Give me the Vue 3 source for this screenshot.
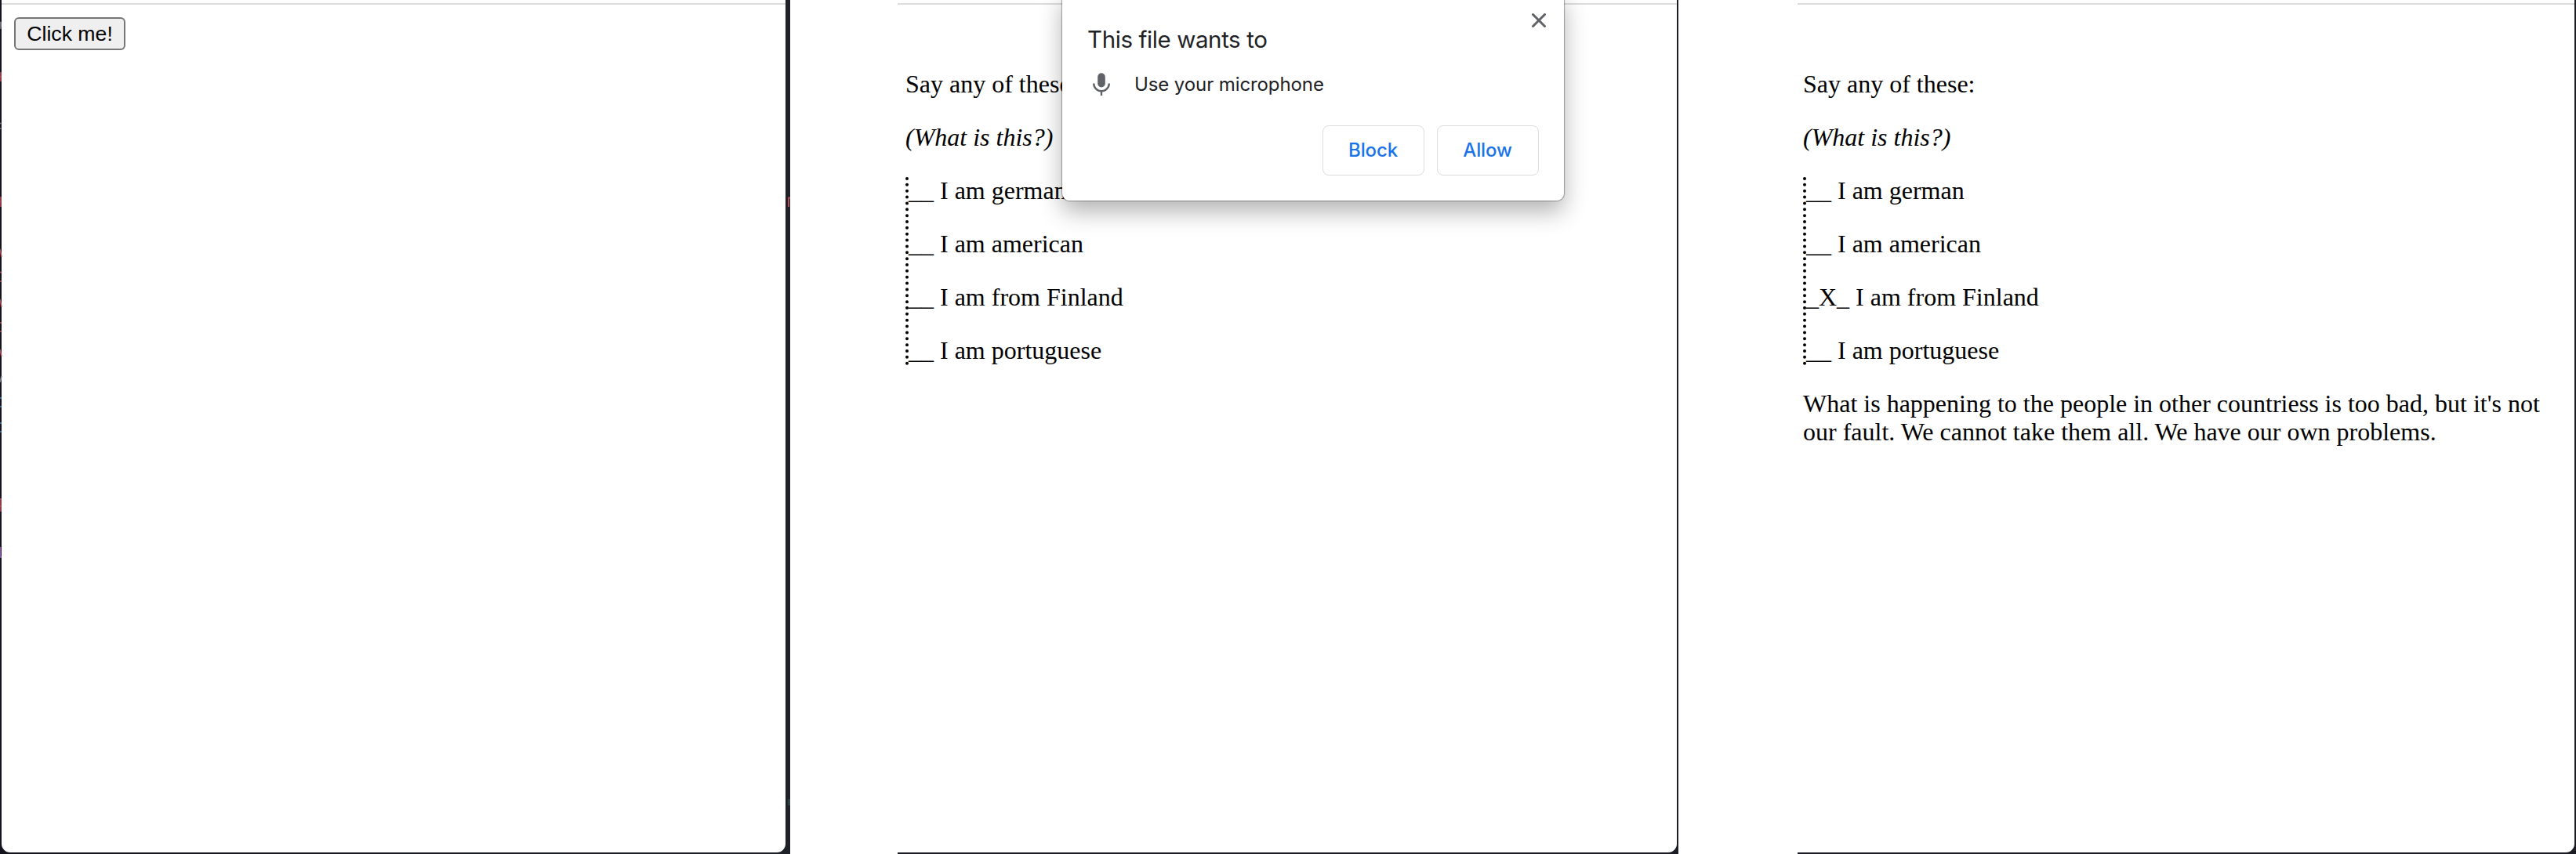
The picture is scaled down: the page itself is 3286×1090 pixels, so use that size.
<script setup>
const leftOptions = ['__ I am german', '__ I am american', '__ I am from Finland', '__ I am portuguese']
const rightOptions = ['__ I am german', '__ I am american', '_X_ I am from Finland', '__ I am portuguese']

const grey = '#7c818c'
const red = '#b04a55'
const blue = '#3f7fb5'
// Slivers of the editor window that show behind the browser's left edge
const slivers = [
  { d: 'M0 28.5H1.5M1 29V35M0 36H1.5', c: grey },
  { d: 'M1 92V104M0 98H2', c: red },
  { d: 'M0 157.5H1.5M0 164H1.5', c: grey },
  { d: 'M0 252H1V264M0 257H1.5', c: red },
  { d: 'M0 318L2 328', c: red },
  { d: 'M0 347.5H2M0 359H2', c: red },
  { d: 'M0 382L2 392', c: red },
  { d: 'M0 412H2M0 423H2', c: red },
  { d: 'M0 446L2 455', c: red },
  { d: 'M0 488L2 480', c: grey },
  { d: 'M0 508H2M0 519H2', c: blue },
  { d: 'M0 540H2M0 551H2', c: blue },
  { d: 'M1 636V653M0 637H2M0 646H2', c: red },
  { d: 'M0.5 698V711H2', c: '#9455ad' }
]
</script>

<template>
  <main class="board">
    <section class="frame first">
      <div class="page">
        <button class="click">Click me!</button>
      </div>
      <svg class="edge" viewBox="0 0 1008 1090">
        <path v-for="s in slivers" :key="s.d" :d="s.d" :stroke="s.c" />
        <path d="M1006 264V252.500H1008" stroke="#b04a55" stroke-width="2" />
        <path d="M1006.500 1020V1028" stroke="#3f5f63" />
      </svg>
    </section>

    <section class="frame second">
      <div class="page">
        <div class="doc">
          <p>Say any of these:</p>
          <p><em>(What is this?)</em></p>
          <div class="options">
            <p v-for="o in leftOptions" :key="o"><span>{{ o }}</span></p>
          </div>
        </div>
      </div>
      <div class="prompt">
        <svg class="close" viewBox="0 0 18 18"><path d="M1.5 1.5 16.5 16.5M16.5 1.5 1.5 16.5" /></svg>
        <h1>This file wants to</h1>
        <div class="permission">
          <svg class="mic" viewBox="0 0 22 29">
            <rect x="6.2" y="0.3" width="9.6" height="18.2" rx="4.8" fill="#5f6368" />
            <path d="M1.2 13.5a9.8 9.8 0 0 0 19.6 0M11 23.3V29" fill="none" stroke="#5f6368" stroke-width="2.4" />
          </svg>
          <span>Use your microphone</span>
        </div>
        <div class="actions">
          <button>Block</button>
          <button>Allow</button>
        </div>
      </div>
    </section>

    <section class="frame third">
      <div class="page">
        <div class="doc">
          <p>Say any of these:</p>
          <p><em>(What is this?)</em></p>
          <div class="options">
            <p v-for="o in rightOptions" :key="o"><span>{{ o }}</span></p>
          </div>
          <p>What is happening to the people in other countriess is too bad, but it's not our fault. We cannot take them all. We have our own problems.</p>
        </div>
      </div>
    </section>
  </main>
</template>

<style>
body { margin: 0; background: #fff; }
</style>

<style scoped>
.board { display: flex; width: 3286px; height: 1090px; overflow: hidden; background: #fff; }
.frame { position: relative; box-sizing: border-box; height: 1090px; background: #1c1d24; padding-bottom: 2px; }
.first { width: 1008px; padding-left: 2px; padding-right: 6px; background: linear-gradient(90deg, #14141c 2px, #1e2127 996px); margin-right: 137px; }
.second { width: 996px; padding-right: 2px; margin-right: 152px; }
.third { width: 993px; padding-right: 2px; }
.edge { position: absolute; left: 0; top: 0; width: 1008px; height: 1090px; pointer-events: none; fill: none; stroke-width: 1.5; }
.page { box-sizing: border-box; height: 1088px; padding-top: 4px; background: #fff; }
.page::before { content: ''; display: block; height: 2px; background: #dcdcdc; }
.first .page { border-radius: 0 0 11px 11px; }
.second .page, .third .page { border-radius: 0 0 11px 0; }
.click {
  display: block; box-sizing: border-box; width: 142px; height: 42px; margin: 16px 0 0 16px; padding: 0 0 1px;
  border: 2px solid #767676; border-radius: 6px; background: #efefef; color: #000;
  font: 26.67px/36px "Liberation Sans", Arial, sans-serif; text-align: center;
}
.doc { padding: 83px 16px 0 10px; font: 32px/36px "Liberation Serif", "Times New Roman", serif; color: #000; }
.third .doc { padding-left: 7px; }
.doc p { margin: 0 0 32px; }
.options { border-left: 4px dotted #000; margin: 33px 0 31px; }
.options p { position: relative; top: -1px; }
.options p:last-child { margin-bottom: 0; }
.doc p:has(+ .options) { margin-bottom: 0; }
.prompt {
  position: absolute; left: 210px; top: -12px; box-sizing: border-box; width: 640px; height: 268px;
  padding: 44px 32px 32px 32px; border-radius: 9px; background: #fff; color: #202124;
  font-family: Inter, sans-serif;
  box-shadow: 0 0 1px 1px rgba(0, 0, 0, .32), 0 14px 30px rgba(0, 0, 0, .3);
}
.close { position: absolute; right: 23px; top: 29px; width: 18px; height: 18px; }
.close path { stroke: #5f6368; stroke-width: 3; stroke-linecap: round; }
.prompt h1 { margin: 0; font-size: 29.5px; line-height: 36px; font-weight: 400; letter-spacing: -.4px; }
.permission { display: flex; align-items: center; gap: 31px; margin: 21px 0 0 7px; height: 36px; font-size: 24px; line-height: 36px; letter-spacing: -.1px; }
.permission span { padding-top: 1px; }
.mic { width: 22px; height: 29px; }
.actions { display: flex; justify-content: flex-end; gap: 16px; margin-top: 35px; }
.actions button {
  box-sizing: border-box; width: 130px; height: 64px; padding: 0 1px 0 0; border: 1px solid #dadce0; border-radius: 8px;
  background: #fff; color: #1a73e8; font: 500 24px/30px Inter, sans-serif; letter-spacing: -.15px;
}
</style>
